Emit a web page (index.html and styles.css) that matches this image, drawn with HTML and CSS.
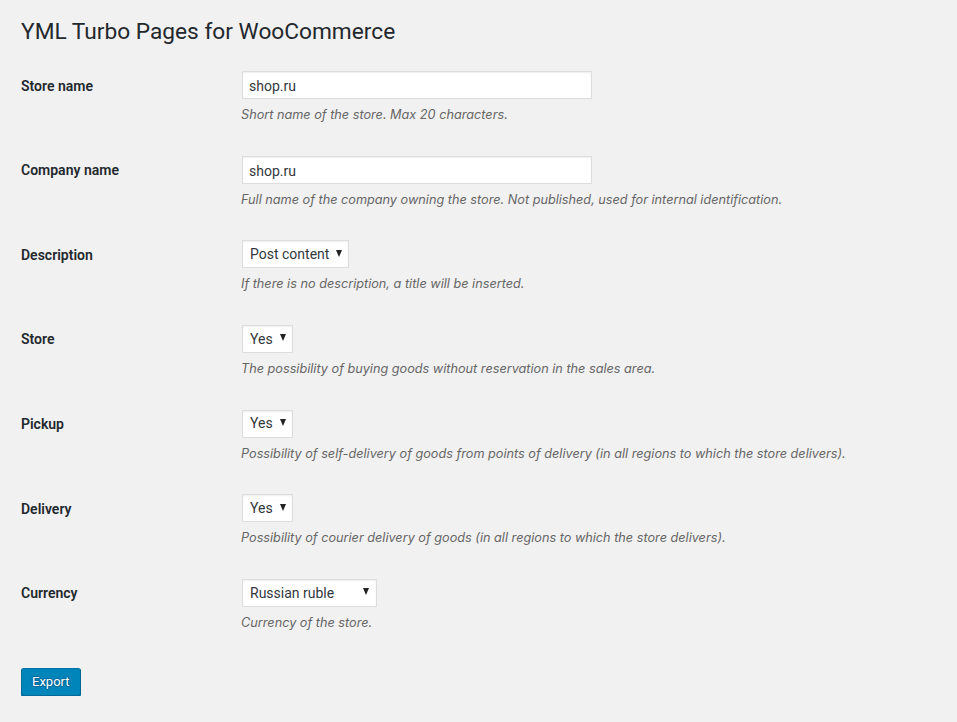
FILE: index.html
```html
<!DOCTYPE html>
<html>
<head>
<meta charset="utf-8">
<link rel="stylesheet" href="styles.css">
</head>
<body>
<div class="wrap">
  <h1 class="title">YML Turbo Pages for WooCommerce</h1>
  <div class="form">
    <div class="row">
      <div class="label">Store name</div>
      <div class="field">
        <div class="input">shop.ru</div>
        <p class="description">Short name of the store. Max 20 characters.</p>
      </div>
    </div>
    <div class="row">
      <div class="label">Company name</div>
      <div class="field">
        <div class="input">shop.ru</div>
        <p class="description">Full name of the company owning the store. Not published, used for internal identification.</p>
      </div>
    </div>
    <div class="row">
      <div class="label">Description</div>
      <div class="field">
        <div class="select">Post content<span class="arrow"></span></div>
        <p class="description">If there is no description, a title will be inserted.</p>
      </div>
    </div>
    <div class="row">
      <div class="label">Store</div>
      <div class="field">
        <div class="select">Yes<span class="arrow"></span></div>
        <p class="description">The possibility of buying goods without reservation in the sales area.</p>
      </div>
    </div>
    <div class="row">
      <div class="label">Pickup</div>
      <div class="field">
        <div class="select">Yes<span class="arrow"></span></div>
        <p class="description">Possibility of self-delivery of goods from points of delivery (in all regions to which the store delivers).</p>
      </div>
    </div>
    <div class="row">
      <div class="label">Delivery</div>
      <div class="field">
        <div class="select">Yes<span class="arrow"></span></div>
        <p class="description">Possibility of courier delivery of goods (in all regions to which the store delivers).</p>
      </div>
    </div>
    <div class="row">
      <div class="label">Currency</div>
      <div class="field">
        <div class="select select-wide">Russian ruble<span class="arrow"></span></div>
        <p class="description">Currency of the store.</p>
      </div>
    </div>
  </div>
  <div class="submit">
    <button class="button-primary">Export</button>
  </div>
</div>
</body>
</html>
```
FILE: styles.css
```css
html, body {
  margin: 0;
  padding: 0;
  background: #f1f1f1;
}
body {
  font-family: Roboto, "Noto Sans", sans-serif;
  font-size: 13px;
  color: #23282d;
  line-height: 1.4;
}
.wrap {
  padding: 0 20px;
}
.title {
  margin: 0;
  padding: 17px 0 0 1px;
  font-size: 22.7px;
  font-weight: 400;
  line-height: 29px;
  color: #23282d;
}
.form {
  margin-top: 10px;
}
.row {
  display: grid;
  grid-template-columns: 221px 1fr;
  height: 84.67px;
}
.label {
  padding-top: 20.5px;
  padding-left: 1px;
  font-size: 14px;
  font-weight: 600;
  line-height: 18px;
}
.field {
  padding-top: 15px;
}
.input {
  box-sizing: border-box;
  width: 350px;
  height: 28px;
  margin-left: 1px;
  padding: 1px 6px 0;
  background: #fff;
  border: 1px solid #ddd;
  box-shadow: inset 0 1px 2px rgba(0,0,0,.07);
  font-size: 14px;
  line-height: 26px;
  color: #32373c;
}
.select {
  box-sizing: border-box;
  display: inline-flex;
  align-items: center;
  height: 28px;
  margin-left: 1px;
  padding: 1px 6px 0 7px;
  background: #fff;
  border: 1px solid #ddd;
  box-shadow: inset 0 1px 2px rgba(0,0,0,.07);
  font-size: 14px;
  color: #32373c;
  gap: 7px;
}
.select-wide {
  width: 135px;
  padding-right: 7px;
  justify-content: space-between;
}
.arrow {
  width: 0;
  height: 0;
  border-left: 3.5px solid transparent;
  border-right: 3.5px solid transparent;
  border-top: 7px solid #222;
  margin-top: -3px;
}
.description {
  margin: 6px 0 0;
  font-family: Inter, Roboto, sans-serif;
  font-size: 12.7px;
  font-style: italic;
  line-height: 19px;
  color: #666;
}
.submit {
  margin-top: 19px;
  padding-left: 1px;
}
.button-primary {
  box-sizing: border-box;
  height: 28px;
  padding: 0 10px 1px;
  background: #0085ba;
  border: 1px solid #0073aa;
  border-color: #0073aa #006799 #006799;
  border-radius: 3px;
  box-shadow: 0 1px 0 #006799;
  color: #fff;
  font-family: inherit;
  font-size: 13px;
  line-height: 26px;
  text-shadow: 0 -1px 1px #006799, 1px 0 1px #006799, 0 1px 1px #006799, -1px 0 1px #006799;
}
```
